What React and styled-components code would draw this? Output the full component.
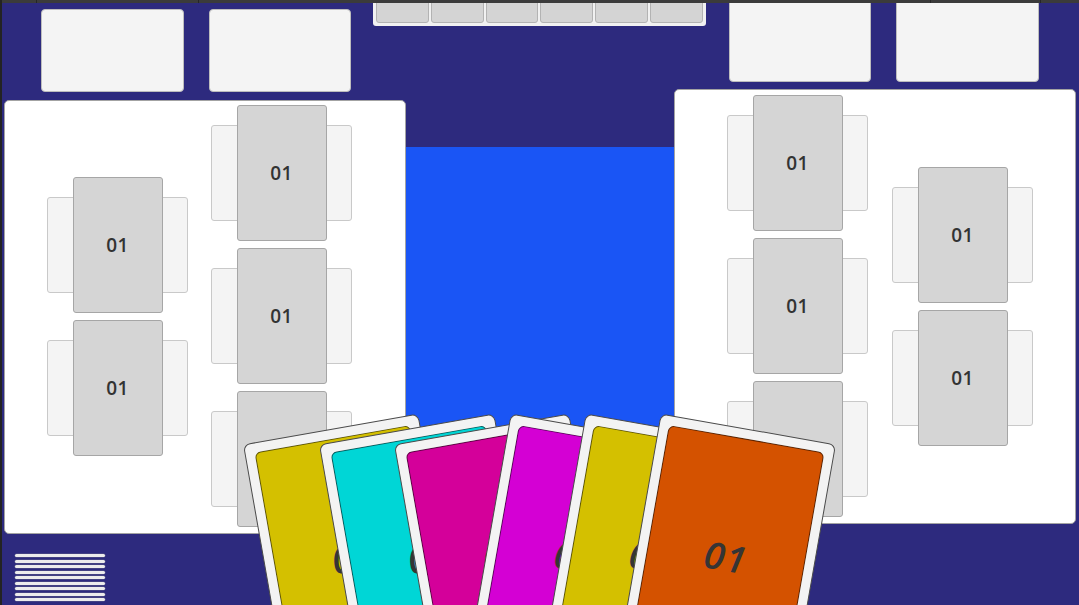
import React from 'react';
import styled, { createGlobalStyle } from 'styled-components';

const Global = createGlobalStyle`
  html, body { margin: 0; padding: 0; background: #2d2a7e; }
  body { font-family: "Open Sans", "Liberation Sans", sans-serif; }
  #root { width: 1079px; height: 605px; }
`;

const Root = styled.div`
  position: relative;
  width: 1079px;
  height: 605px;
  overflow: hidden;
  background: #2d2a7e;
  border-left: 2px solid #232323;
  box-sizing: border-box;
  display: flex;
  flex-direction: column;
`;

const TopBar = styled.div`
  position: relative;
  z-index: 3;
  height: 3px;
  flex: none;
  display: flex;
  background: #3b3b3b;
  margin-left: -2px;
`;

const BarSegment = styled.div`
  width: ${p => p.$w}px;
  flex: ${p => (p.$w ? 'none' : '1')};
  border-right: ${p => (p.$w ? '1px solid #262626' : 'none')};
`;

const Stage = styled.div`
  flex: 1;
  display: grid;
  grid-template-columns: 402px 268px 402px;
  align-items: start;
  padding-left: 2px;
`;

const SideColumn = styled.div`
  display: flex;
  flex-direction: column;
  align-items: ${p => (p.$side === 'left' ? 'flex-start' : 'flex-end')};
`;

const SeatRow = styled.div`
  display: flex;
  gap: 25px;
  height: ${p => p.$h}px;
  margin-top: ${p => p.$top}px;
  padding: 0 37px;
`;

const Slot = styled.div`
  width: ${p => p.$w}px;
  height: 100%;
  box-sizing: border-box;
  background: #f4f4f4;
  border: 1px solid #bdbdbd;
  border-radius: 4px;
`;

const Panel = styled.div`
  width: 100%;
  height: ${p => p.$h}px;
  margin-top: ${p => p.$top}px;
  box-sizing: border-box;
  background: #ffffff;
  border: 1px solid #a3a3a3;
  border-radius: 5px;
  display: flex;
  align-items: center;
  gap: ${p => p.$gap}px;
  padding: ${p => p.$pt}px 0 6px ${p => p.$pl}px;
`;

const TableColumn = styled.div`
  display: flex;
  flex-direction: column;
  gap: 7px;
`;

const Table = styled.div`
  display: grid;
  width: 141px;
  height: 136px;
`;

const Chairs = styled.div`
  grid-area: 1 / 1;
  align-self: center;
  height: 96px;
  box-sizing: border-box;
  background: #f4f4f4;
  border: 1px solid #c9c9c9;
  border-radius: 3px;
`;

const TableTop = styled.div`
  grid-area: 1 / 1;
  justify-self: center;
  width: 90px;
  height: 100%;
  box-sizing: border-box;
  background: #d5d5d5;
  border: 1px solid #a6a6a6;
  border-radius: 3px;
  display: flex;
  align-items: center;
  justify-content: center;
  font-size: 19px;
  font-weight: 600;
  color: #333;
  letter-spacing: 0.5px;
`;

const CenterColumn = styled.div`
  display: flex;
  flex-direction: column;
  align-items: center;
`;

const TabStrip = styled.div`
  width: 333px;
  height: 27px;
  margin: -4px -32px 0 -33px;
  box-sizing: border-box;
  background: #f1f1f1;
  border-radius: 0 0 3px 3px;
  padding: 0 3px 3px;
  display: flex;
  gap: 2px;
`;

const TabCell = styled.div`
  flex: 1;
  box-sizing: border-box;
  background: #d4d4d4;
  border: 1px solid #b3b3b3;
  border-radius: 0 0 3px 3px;
`;

const Board = styled.div`
  align-self: stretch;
  margin-top: 121px;
  height: 300px;
  background: #1a55f5;
`;

const StackIcon = styled.div`
  margin: 20px 0 0 11px;
  width: 90px;
  display: flex;
  flex-direction: column;
  gap: 2.5px;
`;

const StackLine = styled.div`
  height: 3px;
  background: #ececec;
  border-radius: 1.5px;
  box-shadow: 0 0 0 0.5px rgba(120, 120, 140, 0.6);
`;

const Hand = styled.div`
  position: absolute;
  inset: 0;
  pointer-events: none;
`;

const HandCard = styled.div`
  position: absolute;
  width: 178px;
  height: 258px;
  box-sizing: border-box;
  padding: 9px;
  background: #f3f3f3;
  border: 1px solid #4a4a4a;
  border-radius: 7px;
`;

const CardFace = styled.div`
  width: 100%;
  height: 100%;
  box-sizing: border-box;
  background: ${p => p.$color};
  border: 1px solid rgba(0, 0, 0, 0.55);
  border-radius: 6px;
  display: flex;
  align-items: center;
  justify-content: center;
  font-size: 37px;
  font-style: italic;
  font-weight: 600;
  letter-spacing: 1px;
  color: #353535;
`;

const TableUnit = () => (
  <Table>
    <Chairs />
    <TableTop>01</TableTop>
  </Table>
);

const Column = ({ count }) => (
  <TableColumn>
    {Array.from({ length: count }).map((_, i) => (
      <TableUnit key={i} />
    ))}
  </TableColumn>
);

const handCards = [
  { color: '#d4c000', cx: 352.75, rot: -10 },
  { color: '#00d6d6', cx: 428.75, rot: -10 },
  { color: '#d4009a', cx: 503.75, rot: -10 },
  { color: '#d400d4', cx: 576.25, rot: 10 },
  { color: '#d4c000', cx: 651.25, rot: 10 },
  { color: '#d45200', cx: 726.25, rot: 10 },
];

export default function App() {
  return (
    <>
      <Global />
      <Root>
        <TopBar>
          <BarSegment $w={36} />
          <BarSegment $w={161} />
          <BarSegment $w={731} />
          <BarSegment $w={109} />
          <BarSegment />
        </TopBar>
        <Stage>
          <SideColumn $side="left">
            <SeatRow $h={83} $top={6}>
              <Slot $w={143} />
              <Slot $w={142} />
            </SeatRow>
            <Panel $h={434} $top={8} $pt={4} $pl={42} $gap={23}>
              <Column count={2} />
              <Column count={3} />
            </Panel>
            <StackIcon>
              {Array.from({ length: 9 }).map((_, i) => (
                <StackLine key={i} />
              ))}
            </StackIcon>
          </SideColumn>
          <CenterColumn>
            <TabStrip>
              {Array.from({ length: 6 }).map((_, i) => (
                <TabCell key={i} />
              ))}
            </TabStrip>
            <Board />
          </CenterColumn>
          <SideColumn $side="right">
            <SeatRow $h={83} $top={-4}>
              <Slot $w={142} />
              <Slot $w={143} />
            </SeatRow>
            <Panel $h={435} $top={7} $pt={5} $pl={52} $gap={24}>
              <Column count={3} />
              <Column count={2} />
            </Panel>
          </SideColumn>
        </Stage>
        <Hand>
          {handCards.map((c, i) => (
            <HandCard
              key={i}
              style={{
                left: `${c.cx - 89 - 2}px`,
                top: '427px',
                transform: `rotate(${c.rot}deg)`,
              }}
            >
              <CardFace $color={c.color}>01</CardFace>
            </HandCard>
          ))}
        </Hand>
      </Root>
    </>
  );
}
